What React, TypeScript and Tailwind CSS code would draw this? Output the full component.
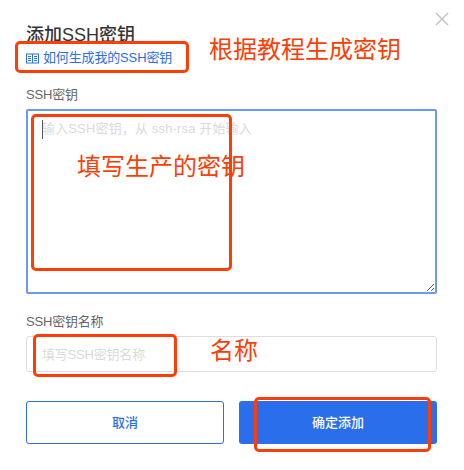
const cjk = 'font-["Liberation_Sans","Noto_Sans_CJK_SC",sans-serif]';

function BookIcon() {
  return (
    <svg width="13" height="11" viewBox="0 0 13 11" fill="none" stroke="#2b6eeb" strokeWidth="1" className="mr-[4px] shrink-0">
      <rect x="0.5" y="1" width="12" height="9" />
      <path d="M6.5 1V10M2 3.5h3M2 5.5h3M2 7.5h3M8 3.5h3M8 5.5h3M8 7.5h3" />
    </svg>
  );
}

function Mark({ className }: { className: string }) {
  return <div className={`absolute rounded-[5px] border-[3px] border-[#ff3d05] ${className}`} />;
}

function Note({ className, children }: { className: string; children: string }) {
  return <div className={`absolute whitespace-nowrap text-[24px] leading-[30px] text-[#ff3d05] ${className}`}>{children}</div>;
}

export default function App() {
  return (
    <div className={`relative h-[470px] w-[464px] overflow-hidden bg-white ${cjk}`}>
      <div className="flex w-[437px] flex-col pl-[26px] pt-[24px]">
        <h1 className="text-[18px] font-medium leading-[22px] text-[#333]">添加SSH密钥</h1>
        <a className="mt-[1px] flex h-[22px] items-center text-[13px] tracking-[-0.15px] text-[#2b6eeb]">
          <BookIcon />
          如何生成我的SSH密钥
        </a>
        <label className="mt-[17px] text-[13px] leading-[18px] tracking-[-0.2px] text-[#666]">SSH密钥</label>
        <textarea
          className="mt-[5px] h-[185px] w-full rounded-[2px] border-2 border-[#6b9bf0] px-[14px] py-[8px] text-[13px] leading-[20px] tracking-[0.15px] outline-none placeholder:text-[#dadada]"
          placeholder="输入SSH密钥，从 ssh-rsa 开始输入"
        />
        <label className="mt-[19px] text-[13px] leading-[18px] tracking-[-0.2px] text-[#666]">SSH密钥名称</label>
        <input
          className="mt-[5px] h-[36px] w-full rounded-[3px] border border-[#dcdce2] px-[15px] text-[13px] tracking-[-0.2px] outline-none placeholder:text-[#dadada]"
          placeholder="填写SSH密钥名称"
        />
        <div className="mt-[29px] flex justify-between">
          <button className="h-[43px] w-[198px] rounded-[3px] border border-[#2b6eeb] bg-white text-[13px] font-medium text-[#2b6eeb]">取消</button>
          <button className="h-[43px] w-[198px] rounded-[3px] bg-[#2b6eeb] text-[13px] font-medium text-white">确定添加</button>
        </div>
      </div>

      <svg width="14" height="14" viewBox="0 0 14 14" stroke="#c4c4c4" strokeWidth="1.5" className="absolute left-[435px] top-[12px]">
        <path d="M1 1l12 12M13 1L1 13" />
      </svg>

      <div className="absolute left-[42px] top-[120px] h-[19px] w-px bg-[#555]" />

      <Mark className="left-[15px] top-[41px] h-[32px] w-[174px]" />
      <Mark className="left-[31px] top-[114px] h-[157px] w-[201px]" />
      <Mark className="left-[33px] top-[334px] h-[43px] w-[144px]" />
      <Mark className="left-[254px] top-[397px] h-[55px] w-[177px]" />

      <Note className="left-[209px] top-[35px]">根据教程生成密钥</Note>
      <Note className="left-[77px] top-[152px]">填写生产的密钥</Note>
      <Note className="left-[210px] top-[336px]">名称</Note>
    </div>
  );
}
